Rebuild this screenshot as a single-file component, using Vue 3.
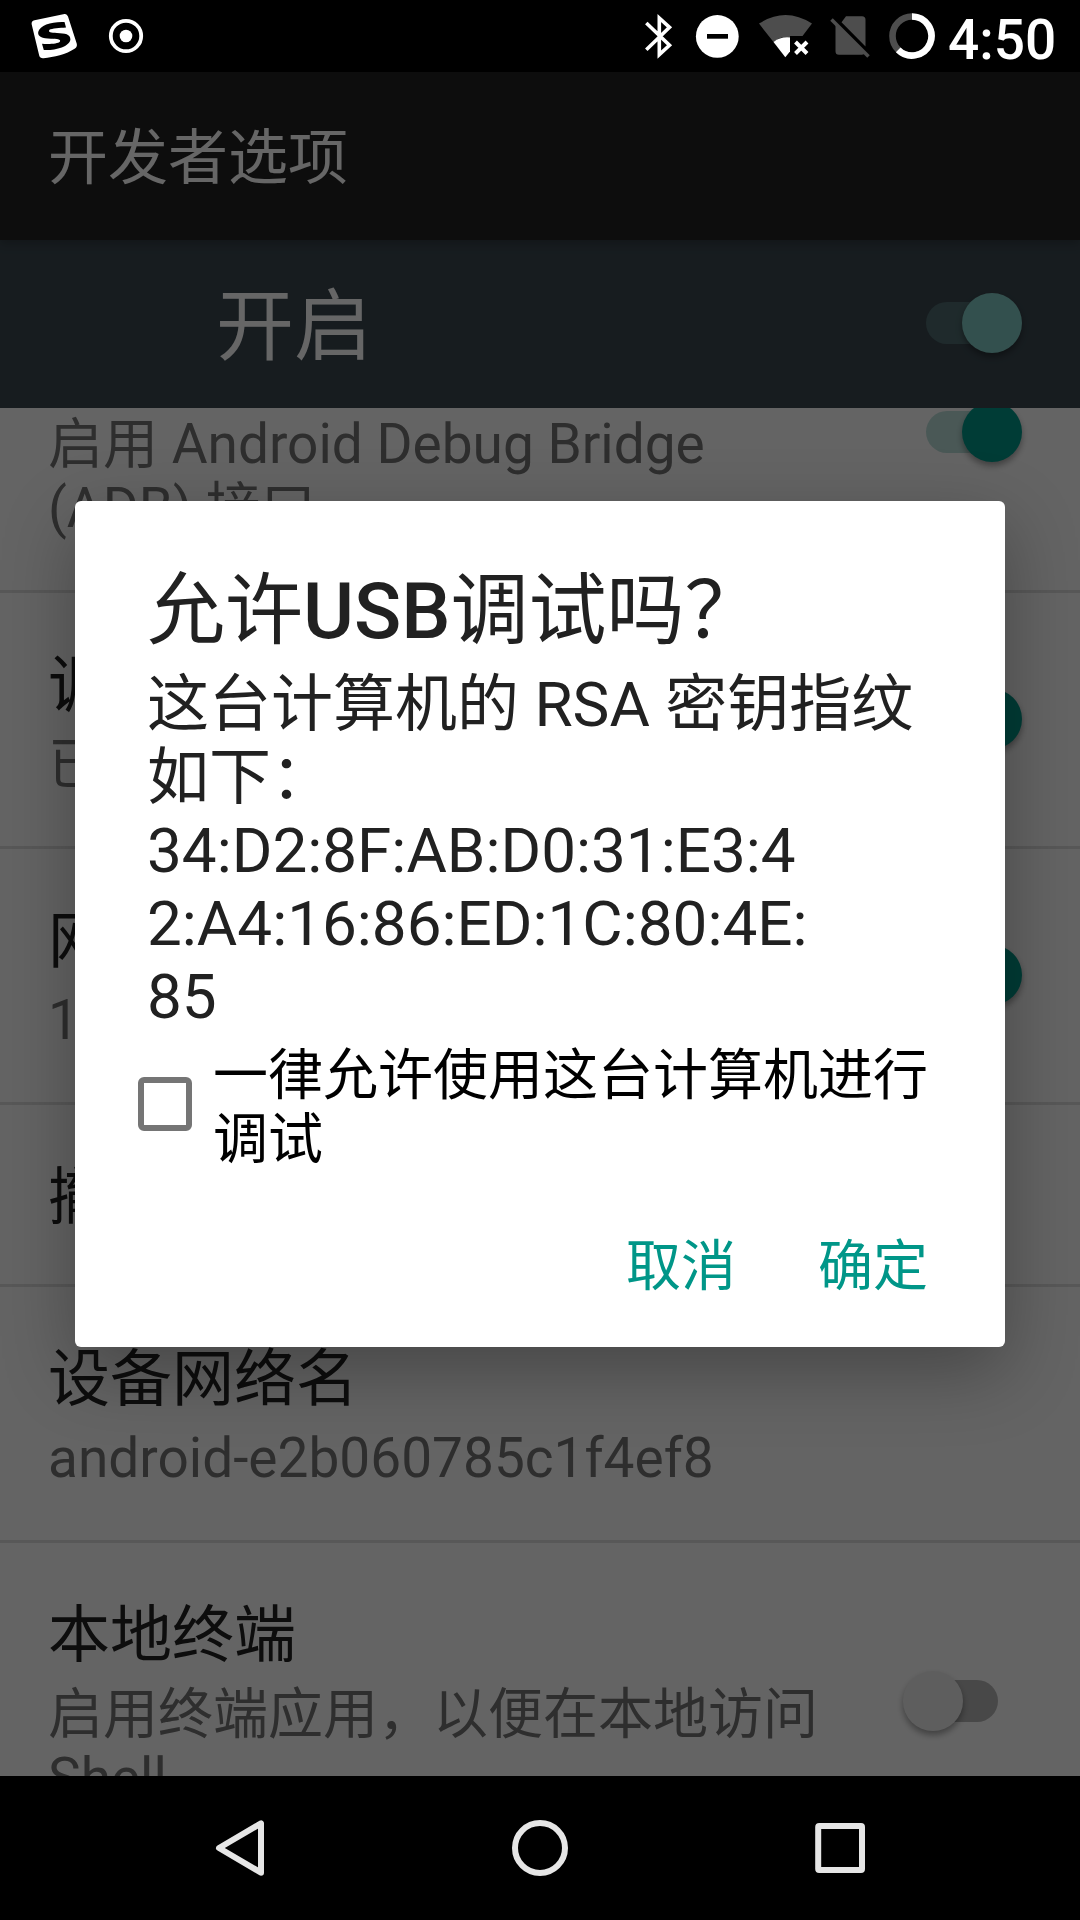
<script setup>
const rows = [
  { summary: ['启用 Android Debug Bridge', '(ADB) 接口'], state: 'on', first: true },
  { title: '调', summary: ['已'], state: 'on' },
  { title: '网', summary: ['1'], state: 'on' },
  { title: '撤', summary: [] },
  { title: '设备网络名', summary: ['android-e2b060785c1f4ef8'] },
  { title: '本地终端', summary: ['启用终端应用，以便在本地访问', 'Shell'], state: 'off' },
]
const message = [
  '这台计算机的 RSA 密钥指纹',
  '如下：',
  '34:D2:8F:AB:D0:31:E3:4',
  '2:A4:16:86:ED:1C:80:4E:',
  '85',
]
</script>

<template>
  <div class="screen">
    <header class="status">
      <svg class="i-sogou" width="48" height="72" viewBox="30 0 48 72">
        <path fill="#fff" d="M34.5 20.3 64.5 14Q67 13.600 68 16.500L76.700 43.500Q77.600 46.500 75 48.500C66 54.500 54 57 43.500 58.200Q40 58.500 39.200 55.500L31.700 24.500Q31 21 34.500 20.300Z" />
        <path fill="#000" d="M64.500 22 66 27.500C60 28 51.500 28.300 49.500 29.800C47.500 32.500 51 32.700 57 32.900C65 33.200 70.500 34 70.400 39.500C69.500 47 54 50.700 43.800 50L42 43.800C49 44.300 58 44 60 41.500C61 39 57 39 51 38.700C42 38.400 37.500 36.500 38.200 32C40 25 52 21.400 64.500 22Z" />
      </svg>
      <svg class="i-dot" width="36" height="72" viewBox="108 0 36 72">
        <circle cx="126" cy="36" r="15.200" fill="none" stroke="#fff" stroke-width="3.800" />
        <circle cx="126" cy="36" r="6.300" fill="#fff" />
      </svg>
      <span class="grow"></span>
      <svg width="32" height="72" viewBox="643 0 32 72">
        <path fill="none" stroke="#fff" stroke-width="3.600" d="M646.300 23 669.500 45.300 659.300 54.600V18L669.500 27.300 646.300 49.700" />
      </svg>
      <svg class="i-dnd" width="44" height="72" viewBox="695 0 44 72">
        <circle cx="717.300" cy="36.400" r="21.400" fill="#fff" />
        <path fill="#000" d="M707 34h21v4.700h-21z" />
      </svg>
      <svg class="i-wifi" width="56" height="72" viewBox="758 0 56 72">
        <path fill="#4d4d4d" d="M759 23.600Q785.500 6.500 812 23.600L802.500 36H790V38Q781 35.500 773.500 42Z" />
        <path fill="#fff" d="M773.500 42Q780.500 36.500 790 37.500V51.500L785.300 57.300Z" />
        <path stroke="#fff" stroke-width="4" d="M795.500 42 807 53.500M807 42 795.500 53.500" />
      </svg>
      <svg class="i-sim" width="42" height="72" viewBox="829 0 42 72">
        <path fill="#4d4d4d" d="M846 16.300H862Q865.500 16.300 865.500 19.800V46.500L841.500 22.300ZM835.500 23.500 865 53Q864 54.800 862 54.800H839Q835.500 54.800 835.500 51.300Z" />
        <path stroke="#4d4d4d" stroke-width="3.600" d="M831.500 19.500 868.500 56.500" />
      </svg>
      <svg class="i-batt" width="48" height="72" viewBox="888 0 48 72">
        <circle cx="912" cy="36" r="19.500" fill="none" stroke="#4d4d4d" stroke-width="6.600" />
        <path fill="none" stroke="#fff" stroke-width="6.600" d="M912 16.500A19.500 19.500 0 1 1 898.200 49.800" />
      </svg>
      <span class="clock">4:50</span>
    </header>

    <main class="app">
      <div class="toolbar">开发者选项</div>
      <div class="switchbar">
        <span>开启</span>
        <i class="switch on light"></i>
      </div>
      <div class="list">
        <div v-for="(row, i) in rows" :key="i" class="row" :class="{ first: row.first }">
          <div class="texts">
            <div v-if="row.title" class="title">{{ row.title }}</div>
            <div v-if="row.summary.length" class="summary">
              <div v-for="line in row.summary" :key="line">{{ line }}</div>
            </div>
          </div>
          <i v-if="row.state" class="switch" :class="row.state"></i>
        </div>
      </div>
      <div class="scrim"></div>
      <section class="dialog">
        <h1>允许<b>USB</b>调试吗？</h1>
        <div class="message">
          <div v-for="line in message" :key="line">{{ line }}</div>
        </div>
        <div class="check">
          <i class="box"></i>
          <div>一律允许使用这台计算机进行<br />调试</div>
        </div>
        <div class="actions"><span>取消</span><span>确定</span></div>
      </section>
    </main>

    <nav class="nav">
      <svg width="60" height="72" viewBox="210 1812 60 72">
        <path d="M219 1848 261 1823.300V1872.700Z" />
      </svg>
      <svg width="60" height="72" viewBox="510 1812 60 72">
        <circle cx="540" cy="1848" r="25" />
      </svg>
      <svg width="60" height="72" viewBox="810 1812 60 72">
        <rect x="818.200" y="1826" width="43.800" height="44" rx="1" />
      </svg>
    </nav>
  </div>
</template>

<style>
body {
  margin: 0;
  background: #000;
}
</style>

<style scoped>
.screen {
  width: 1080px;
  height: 1920px;
  overflow: hidden;
  display: flex;
  flex-direction: column;
  background: #000;
  font-family: Roboto, "Noto Sans CJK SC", sans-serif;
  white-space: nowrap;
}
.status {
  height: 72px;
  flex: none;
  display: flex;
  padding: 0 26px 0 30px;
  color: #fff;
}
.status svg { flex: none; display: block; }
.i-dot { margin-left: 30px; }
.grow { flex: 1; }
.i-dnd { margin-left: 20px; }
.i-wifi { margin-left: 19px; }
.i-sim { margin-left: 15px; }
.i-batt { margin-left: 17px; }
.clock {
  width: 106px;
  margin-left: 12px;
  padding-top: 8px;
  font-size: 55px;
  line-height: 64px;
  font-weight: 500;
}
.app {
  position: relative;
  height: 1704px;
  flex: none;
  overflow: hidden;
  display: flex;
  flex-direction: column;
  background: #fafafa;
}
.toolbar {
  position: relative;
  z-index: 1;
  box-sizing: border-box;
  height: 168px;
  flex: none;
  padding: 52px 48px 0;
  background: #212121;
  color: #fff;
  font-size: 60px;
  line-height: 70px;
  box-shadow: 0 3px 10px rgba(0, 0, 0, 0.25);
}
.switchbar {
  box-sizing: border-box;
  height: 168px;
  flex: none;
  display: flex;
  align-items: center;
  justify-content: space-between;
  padding: 0 82px 0 216px;
  background: #3a474f;
  color: #fff;
  font-size: 78px;
  line-height: 91px;
}
.switchbar span { padding-top: 6px; }
.switchbar .switch { margin-bottom: 2px; }
.list {
  flex: 1;
  min-height: 0;
  overflow: hidden;
}
.row {
  display: flex;
  justify-content: space-between;
  align-items: center;
  padding: 56px 82px 50px 48px;
  border-bottom: 3px solid #dcdcdc;
}
.row.first {
  align-items: flex-start;
  padding-top: 4px;
}
.title {
  font-size: 62px;
  line-height: 73px;
  color: #212121;
}
.summary {
  font-size: 55px;
  line-height: 64px;
  color: #737373;
}
.title + .summary { margin-top: 10px; }
.switch {
  position: relative;
  flex: none;
  width: 72px;
  height: 42px;
  border-radius: 21px;
  background: #b9dcd7;
}
.switch::after {
  content: "";
  position: absolute;
  top: -9px;
  left: 35.5px;
  width: 60px;
  height: 60px;
  border-radius: 50%;
  background: #009688;
  box-shadow: 0 4px 6px rgba(0, 0, 0, 0.35);
}
.switch.light { background: #4e6a6e; }
.switch.light::after { background: #80c8c2; }
.switch.off { background: #b4b4b4; }
.switch.off::after {
  left: -23.5px;
  background: #ececec;
}
.row:not(.first) .switch { margin-bottom: 7px; }
.row.first .switch { margin-top: -1.5px; }
.scrim {
  position: absolute;
  inset: 0;
  z-index: 2;
  background: rgba(0, 0, 0, 0.6);
}
.dialog {
  position: absolute;
  z-index: 3;
  left: 75px;
  top: 429px;
  box-sizing: border-box;
  width: 930px;
  height: 846px;
  padding: 65px 72px 0;
  border-radius: 6px;
  background: #fff;
  color: #212121;
  box-shadow: 0 24px 72px rgba(0, 0, 0, 0.3);
}
h1 {
  margin: 0;
  font-size: 78px;
  line-height: 91px;
  font-weight: 400;
}
h1 b { font-weight: 500; }
.message {
  margin-top: 11px;
  font-size: 62px;
  line-height: 73px;
}
.check {
  display: flex;
  margin: 10px 0 0 -9px;
  gap: 21px;
  font-size: 55px;
  line-height: 64px;
  color: #000;
}
.box {
  box-sizing: border-box;
  width: 54px;
  height: 54px;
  margin-top: 34px;
  border: 6px solid #757575;
  border-radius: 6px;
}
.actions {
  display: flex;
  justify-content: flex-end;
  gap: 82px;
  margin: 63px 5px 0 0;
  font-size: 55px;
  line-height: 64px;
  color: #009688;
}
.nav {
  height: 144px;
  flex: none;
  display: flex;
  align-items: center;
  justify-content: center;
  gap: 240px;
}
.nav svg {
  fill: none;
  stroke: #e6e6e6;
  stroke-width: 6;
  stroke-linejoin: round;
}
</style>
